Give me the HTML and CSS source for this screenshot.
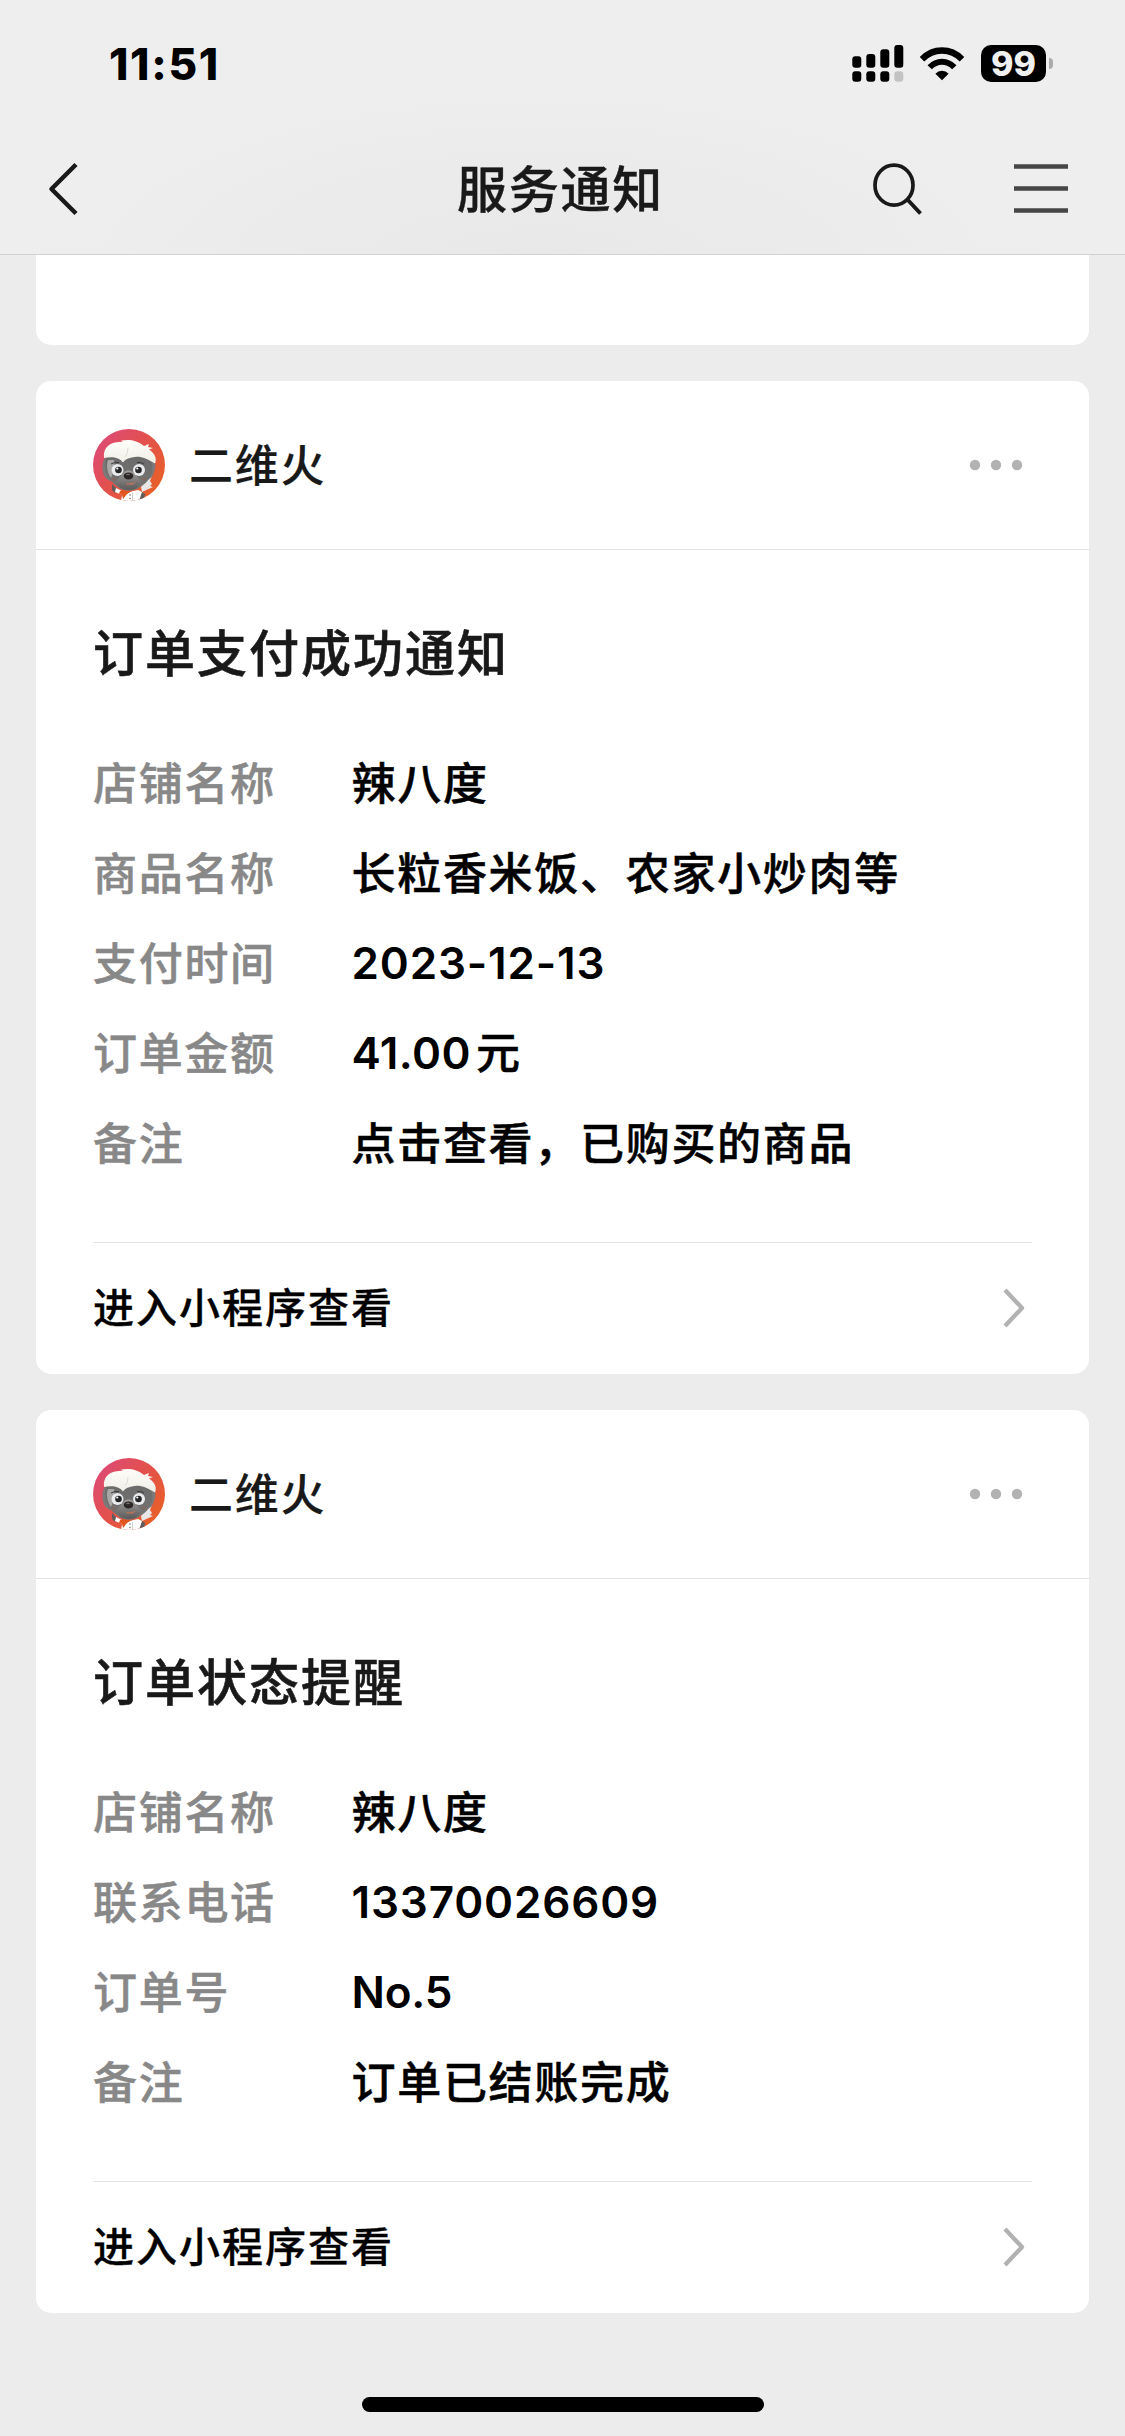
FILE: index.html
```html
<!DOCTYPE html>
<html lang="zh-CN">
<head>
<meta charset="utf-8">
<title>服务通知</title>
<link rel="stylesheet" href="styles.css">
</head>
<body>
<svg class="defs" width="0" height="0" aria-hidden="true">
  <defs>
    <linearGradient id="ring" x1="0" y1="0.1" x2="1" y2="0.9">
      <stop offset="0" stop-color="#dc4a7c"/>
      <stop offset="0.45" stop-color="#e2504f"/>
      <stop offset="1" stop-color="#e9631f"/>
    </linearGradient>
    <linearGradient id="face" x1="0" y1="0" x2="0" y2="1">
      <stop offset="0" stop-color="#6a6a6a"/>
      <stop offset="1" stop-color="#777574"/>
    </linearGradient>
    <linearGradient id="muzzle" x1="0" y1="0" x2="0" y2="1">
      <stop offset="0" stop-color="#a09e9d"/>
      <stop offset="1" stop-color="#5c5a59"/>
    </linearGradient>
    <linearGradient id="hair" x1="0" y1="0" x2="0" y2="1">
      <stop offset="0" stop-color="#fffefa"/>
      <stop offset="1" stop-color="#efeee6"/>
    </linearGradient>
    <clipPath id="round"><circle cx="36" cy="36" r="36"/></clipPath>
    <symbol id="avatar" viewBox="0 0 72 72">
      <g clip-path="url(#round)">
        <rect width="72" height="72" fill="url(#ring)"/>
        <path d="M48 58l6-8 5-3-2 5 2 3-2 2 3 1-11 5z" fill="#e8e6e6"/>
        <path d="M19 55l5 5-2 4-3-3z" fill="#5f5c5b"/>
        <path d="M47 62l5 3-1 7h-6z" fill="#5f5c5b"/>
        <path d="M23 59l6 3 7 1 9-2 4 2-3 9H28l1-6-7-3z" fill="#fff"/>
        <path d="M27 62l4-1 8 1-5 3-4 5-1-4-3-1z" fill="#e4561f"/>
        <path d="M39.500 64v8" stroke="#bbb" stroke-width="0.7"/>
        <circle cx="37" cy="66" r="0.8" fill="#777"/><circle cx="37" cy="69.500" r="0.8" fill="#777"/>
        <path d="M12 29c-3 4-3 10-2 14 1 5 4 8 8 9l3-21zM60 29c3 4 3 10 1 14-1 4-3 7-7 8l-3-20z" fill="#7b7a79"/>
        <path d="M13 28c6-3 13-2 20-1 9-1 18-1 24 2 3 6 3 14 0 19-3 6-7 8-10 10-6 5-17 5-22 0-6-4-10-9-12-15-1-5-1-10 0-15z" fill="url(#face)"/>
        <path d="M15 31l6 0 1 8-4 10c-4-5-5-13-3-18z" fill="#aaa8a6"/>
        <path d="M11 29C10 20 15 15 22 13.500l8-1-2-1c8-1.500 16-.5 23 5.500l5-2-1 3 5 1-4 1.500c6 4 8 9 6 14-9-5-15-8-23-6-4 1-6 1-9 5-4-6-12-6-19-4.500z" fill="url(#hair)"/>
        <path d="M35 19q0 6-3 9" fill="none" stroke="#deddd3" stroke-width="1"/>
        <path d="M18 35q3-2 8-1.500M44 33.500q4-1 7 1.500" fill="none" stroke="#3c3a3a" stroke-width="1"/>
        <path d="M31 43c2-2 7-2 9 0l8 9c-1 6-6 9-12 9s-12-3-13-8z" fill="url(#muzzle)"/>
        <circle cx="24.500" cy="41" r="6" fill="#e9ebed"/><circle cx="46" cy="41" r="6" fill="#e9ebed"/>
        <circle cx="25.500" cy="41" r="3.300" fill="#252526"/><circle cx="45.500" cy="41" r="3.300" fill="#252526"/>
        <circle cx="24.300" cy="39.500" r="1.100" fill="#fff"/><circle cx="44.300" cy="39.500" r="1.100" fill="#fff"/>
        <ellipse cx="35.500" cy="47" rx="4.800" ry="3.400" fill="#2c2827"/>
        <ellipse cx="35" cy="45.500" rx="2" ry="0.700" fill="#77706c"/>
        <path d="M33 54q6 1 10-1.500l-3 3h-6z" fill="#c07058"/>
        <ellipse cx="20.500" cy="50" rx="2.500" ry="1.500" fill="#806a62"/><ellipse cx="51" cy="50" rx="2.500" ry="1.500" fill="#806a62"/>
      </g>
    </symbol>
    <symbol id="more" viewBox="0 0 54 12">
      <circle cx="6" cy="6" r="5.200"/><circle cx="27" cy="6" r="5.200"/><circle cx="48" cy="6" r="5.200"/>
    </symbol>
    <symbol id="next" viewBox="0 0 22 40">
      <path d="M2 2L19 20 2 38" fill="none" stroke="#b2b2b2" stroke-width="4.300" stroke-linejoin="round"/>
    </symbol>
  </defs>
</svg>

<header class="top">
  <div class="status">
    <time class="clock">11:51</time>
    <div class="indicators">
      <svg class="signal" viewBox="0 0 52 37" width="52" height="37">
        <rect x="0.300" y="11.300" width="9" height="11.500" rx="3"/><rect x="14.300" y="9" width="9" height="13.800" rx="3"/>
        <rect x="28.300" y="4.300" width="9" height="18.500" rx="3"/><rect x="42.300" y="0" width="9" height="22.800" rx="3"/>
        <rect x="0.300" y="26.300" width="9" height="10.400" rx="3"/><rect x="14.300" y="26.300" width="9" height="10.400" rx="3"/>
        <rect x="28.300" y="26.300" width="9" height="10.400" rx="3"/><rect x="42.300" y="26.300" width="9" height="10.400" rx="3" fill="#c3c3c3"/>
      </svg>
      <svg class="wifi" viewBox="0 0 44 34" width="44" height="34">
        <path d="M22 33.300l-6.600-6.600q2.600-2.900 6.600-2.900t6.600 2.900z"/>
        <path d="M9.700 20.300Q15 14.700 22 14.700t12.300 5.600" fill="none" stroke="#000" stroke-width="6"/>
        <path d="M2 12.200Q10.500 3.500 22 3.500t20 8.700" fill="none" stroke="#000" stroke-width="6.300"/>
      </svg>
      <div class="battery"><span class="level">99</span><i class="nub"></i></div>
    </div>
  </div>
  <nav class="bar">
    <svg class="back" viewBox="0 0 30 54" width="30" height="54"><path d="M28 2.500L3.500 27l24.500 24.500" fill="none" stroke="#191919" stroke-width="4.500" stroke-linejoin="round"/></svg>
    <h1 class="heading">服务通知</h1>
    <div class="tools">
      <svg viewBox="0 0 50 54" width="50" height="54"><g fill="none" stroke="#191919" stroke-width="3.700"><ellipse cx="22" cy="23.200" rx="19" ry="20"/><path d="M35.400 37.500L48.500 51.500" stroke-width="4"/></g></svg>
      <svg viewBox="0 0 54 54" width="54" height="54"><path d="M0 4.500h54M0 26.500h54M0 48.500h54" stroke="#464646" stroke-width="4.400"/></svg>
    </div>
  </nav>
</header>

<main class="feed">
  <section class="card tail"></section>

  <article class="card">
    <header class="sender"><svg class="avatar"><use href="#avatar"/></svg><span class="name">二维火</span><svg class="more"><use href="#more"/></svg></header>
    <div class="content">
      <h2 class="title">订单支付成功通知</h2>
      <dl class="fields">
        <dt>店铺名称</dt><dd>辣八度</dd>
        <dt>商品名称</dt><dd>长粒香米饭、农家小炒肉等</dd>
        <dt>支付时间</dt><dd class="latin">2023-12-13</dd>
        <dt>订单金额</dt><dd class="latin amount">41.00<span class="unit">元</span></dd>
        <dt>备注</dt><dd>点击查看，已购买的商品</dd>
      </dl>
      <a class="open"><span>进入小程序查看</span><svg class="next"><use href="#next"/></svg></a>
    </div>
  </article>

  <article class="card">
    <header class="sender"><svg class="avatar"><use href="#avatar"/></svg><span class="name">二维火</span><svg class="more"><use href="#more"/></svg></header>
    <div class="content">
      <h2 class="title">订单状态提醒</h2>
      <dl class="fields">
        <dt>店铺名称</dt><dd>辣八度</dd>
        <dt>联系电话</dt><dd class="latin">13370026609</dd>
        <dt>订单号</dt><dd class="latin tight">No.5</dd>
        <dt>备注</dt><dd>订单已结账完成</dd>
      </dl>
      <a class="open"><span>进入小程序查看</span><svg class="next"><use href="#next"/></svg></a>
    </div>
  </article>
</main>
<footer class="home"><i class="handle"></i></footer>
</body>
</html>
```
FILE: styles.css
```css
* { box-sizing: border-box; }

body {
  margin: 0;
  width: 1125px;
  height: 2436px;
  overflow: hidden;
  display: flex;
  flex-direction: column;
  background: #ececec;
  color: #191919;
  font-family: Inter, "Noto Sans CJK SC", sans-serif;
  font-weight: 500;
}

h1, h2, dl, dd { margin: 0; }
svg { display: block; flex: none; }
.defs { position: absolute; }

.top {
  height: 255px;
  border-bottom: 1px solid #d1d1d1;
  background: radial-gradient(ellipse 520px 200px at 540px 270px, #e8e8e8, #eee);
}

.status {
  height: 127px;
  padding: 0 72px 0 109px;
  display: flex;
  justify-content: space-between;
  align-items: center;
}
.clock { font-size: 44px; font-weight: 800; letter-spacing: 1.700px; line-height: 50px; color: #000; }
.indicators { display: flex; align-items: center; }
.wifi { margin: 0 17px 0 16px; }

.battery { display: flex; align-items: center; gap: 3px; }
.level {
  width: 65px;
  height: 37px;
  border-radius: 10px;
  background: #000;
  color: #f0f0f0;
  font-size: 34px;
  font-weight: 800;
  line-height: 37px;
  text-align: center;
}
.nub { width: 4px; height: 11px; border-radius: 0 4px 4px 0; background: #ababab; }

.bar {
  height: 123px;
  padding: 0 57px 0 48px;
  display: grid;
  grid-template-columns: 1fr auto 1fr;
  align-items: center;
}
.heading {
  padding: 3px 0 0 5px;
  font-size: 50px;
  font-weight: 500;
  letter-spacing: 1.700px;
  line-height: 72px;
  -webkit-text-stroke: 0.400px;
}
.tools { display: flex; justify-content: flex-end; gap: 92px; }

.feed { padding: 0 36px; display: flex; flex-direction: column; gap: 36px; }
.card { border-radius: 15px; background: #fff; }
.tail { height: 90px; border-radius: 0 0 15px 15px; }

.sender {
  height: 169px;
  padding: 0 66px 0 57px;
  display: flex;
  align-items: center;
  border-bottom: 1px solid #e3e3e3;
}
.avatar { width: 72px; height: 72px; }
.name {
  margin-left: 24px;
  padding-bottom: 4px;
  font-size: 44px;
  letter-spacing: 1.700px;
  -webkit-text-stroke: 0.200px;
}
.more { width: 54px; height: 12px; margin-left: auto; fill: #b2b2b2; }

.content { padding: 64px 57px 0; }
.title {
  height: 81px;
  font-size: 50px;
  font-weight: 500;
  letter-spacing: 2px;
  line-height: 81px;
  -webkit-text-stroke: 0.600px;
}
.fields {
  padding: 44px 0 53px;
  display: grid;
  grid-template-columns: 258.500px 1fr;
  grid-auto-rows: 90px;
  font-size: 44px;
  letter-spacing: 1.700px;
  line-height: 90px;
  -webkit-text-stroke: 0.500px;
}
.fields dt { color: #888; }
.fields dd { color: #000; }
.fields .latin { font-weight: 600; letter-spacing: 0.850px; line-height: 88px; -webkit-text-stroke: 0; }
.fields .amount { letter-spacing: 0.400px; }
.fields .tight { letter-spacing: -0.200px; }
.unit { margin-left: 5px; font-weight: 500; -webkit-text-stroke: 0.500px; }

.open {
  height: 132px;
  padding: 0 7px 4px 0;
  display: flex;
  align-items: center;
  justify-content: space-between;
  border-top: 1px solid #e3e3e3;
  color: #000;
  font-size: 41px;
  letter-spacing: 2px;
  -webkit-text-stroke: 0.300px;
}
.open span { padding-bottom: 4px; }
.next { width: 22px; height: 40px; margin-top: 2px; }

.home { display: flex; justify-content: center; padding-top: 84px; }
.handle { width: 402px; height: 15px; border-radius: 8px; background: #000; }
```
